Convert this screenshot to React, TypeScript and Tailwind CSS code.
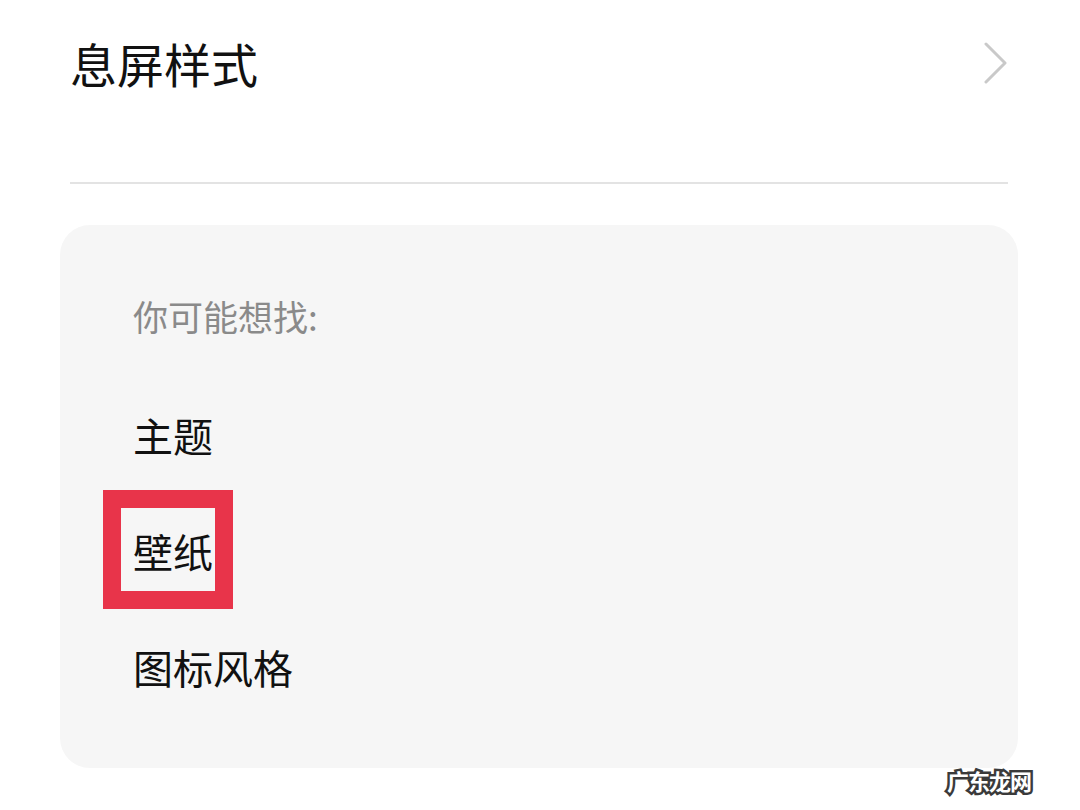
const cjk = "font-['Noto_Sans_CJK_SC','Noto_Sans',sans-serif]";

function Chevron() {
  return (
    <svg width="26" height="42" viewBox="0 0 26 42" fill="none">
      <path
        d="M3 2 L22 21 L3 40"
        stroke="#c9c9c9"
        strokeWidth="3"
        strokeLinecap="round"
        strokeLinejoin="round"
      />
    </svg>
  );
}

const suggestions = ["主题", "壁纸", "图标风格"];

export default function App() {
  return (
    <div className={`relative h-[810px] w-[1080px] overflow-hidden bg-white ${cjk}`}>
      {/* setting row */}
      <div className="flex h-[126px] items-center justify-between pl-[70px] pr-[71px]">
        <span className="text-[47px] leading-none text-[#111] pb-[1px]">息屏样式</span>
        <Chevron />
      </div>

      <div className="mt-[56px] ml-[70px] mr-[72px] h-[2px] bg-[#e3e3e3]" />

      {/* suggestion card */}
      <div className="ml-[60px] mr-[62px] mt-[41px] rounded-[30px] bg-[#f6f6f6] pl-[73px] pt-[67px] pb-[43px]">
        <div className="text-[35px] leading-[48px] text-[#8a8a8a]">你可能想找:</div>
        <ul className="mt-[37px]">
          {suggestions.map((s) => (
            <li key={s} className="flex h-[116px] items-center text-[40px] text-[#111]">
              <span className="relative">
                {s}
                {s === "壁纸" && (
                  <span className="absolute left-[-30px] top-[-31px] h-[119px] w-[130px] border-[18px] border-[#e8344a]" />
                )}
              </span>
            </li>
          ))}
        </ul>
      </div>

      {/* watermark */}
      <span className="absolute left-[947px] top-[769px] text-[22px] font-bold leading-none tracking-[-1px] text-white [-webkit-text-stroke:5px_#3a3a3a] [paint-order:stroke_fill]">
        广东龙网
      </span>
    </div>
  );
}
